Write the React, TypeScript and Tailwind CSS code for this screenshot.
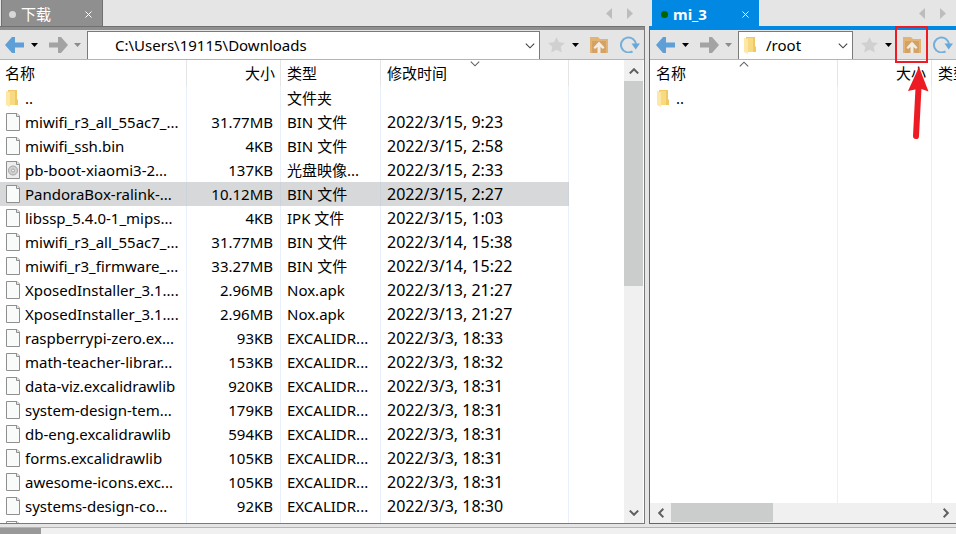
import React from "react";

type Entry = { name: string; size?: string; type?: string; date?: string; kind?: "folder" | "disc"; selected?: boolean };

const localFiles: Entry[] = [
  { name: "..", type: "文件夹", kind: "folder" },
  { name: "miwifi_r3_all_55ac7_...", size: "31.77MB", type: "BIN 文件", date: "2022/3/15, 9:23" },
  { name: "miwifi_ssh.bin", size: "4KB", type: "BIN 文件", date: "2022/3/15, 2:58" },
  { name: "pb-boot-xiaomi3-2...", size: "137KB", type: "光盘映像...", date: "2022/3/15, 2:33", kind: "disc" },
  { name: "PandoraBox-ralink-...", size: "10.12MB", type: "BIN 文件", date: "2022/3/15, 2:27", selected: true },
  { name: "libssp_5.4.0-1_mips...", size: "4KB", type: "IPK 文件", date: "2022/3/15, 1:03" },
  { name: "miwifi_r3_all_55ac7_...", size: "31.77MB", type: "BIN 文件", date: "2022/3/14, 15:38" },
  { name: "miwifi_r3_firmware_...", size: "33.27MB", type: "BIN 文件", date: "2022/3/14, 15:22" },
  { name: "XposedInstaller_3.1....", size: "2.96MB", type: "Nox.apk", date: "2022/3/13, 21:27" },
  { name: "XposedInstaller_3.1....", size: "2.96MB", type: "Nox.apk", date: "2022/3/13, 21:27" },
  { name: "raspberrypi-zero.ex...", size: "93KB", type: "EXCALIDR...", date: "2022/3/3, 18:33" },
  { name: "math-teacher-librar...", size: "153KB", type: "EXCALIDR...", date: "2022/3/3, 18:32" },
  { name: "data-viz.excalidrawlib", size: "920KB", type: "EXCALIDR...", date: "2022/3/3, 18:31" },
  { name: "system-design-tem...", size: "179KB", type: "EXCALIDR...", date: "2022/3/3, 18:31" },
  { name: "db-eng.excalidrawlib", size: "594KB", type: "EXCALIDR...", date: "2022/3/3, 18:31" },
  { name: "forms.excalidrawlib", size: "105KB", type: "EXCALIDR...", date: "2022/3/3, 18:31" },
  { name: "awesome-icons.exc...", size: "105KB", type: "EXCALIDR...", date: "2022/3/3, 18:31" },
  { name: "systems-design-co...", size: "92KB", type: "EXCALIDR...", date: "2022/3/3, 18:30" },
  { name: "" },
];

const remoteFiles: Entry[] = [{ name: "..", kind: "folder" }];

function Arrow({ forward }: { forward?: boolean }) {
  return (
    <svg width="19" height="16" viewBox="0 0 19 16" className={forward ? "block rotate-180 text-[#a3a3a3]" : "block text-[#5f9fd8]"}>
      <path fill="currentColor" d="M0 8L7 0H10V5.5H19V10.5H10V16H7Z" />
    </svg>
  );
}

function Caret({ muted }: { muted?: boolean }) {
  return (
    <svg width="7" height="4" viewBox="0 0 7 4" className={muted ? "block text-[#8c8c8c]" : "block text-black"}>
      <path fill="currentColor" d="M0 0H7L3.5 4Z" />
    </svg>
  );
}

function Chevron({ className, bold }: { className: string; bold?: boolean }) {
  return (
    <svg width="10" height="6" viewBox="0 0 10 6" className={`block ${className}`}>
      <path d="M0.8 0.6L5 4.8L9.2 0.6" fill="none" stroke="currentColor" strokeWidth={bold ? 2 : 1.1} />
    </svg>
  );
}

function FolderIcon() {
  return (
    <svg width="13" height="17" viewBox="0 0 13 17" className="block shrink-0">
      <path fill="#efc964" d="M2 0H11V9L12 10V15H3Z" />
      <path fill="#f8da80" d="M3 1H9V15H3Z" />
      <path fill="#ffe8a6" d="M0 0.5L4 2.5V17L0 15Z" />
    </svg>
  );
}

function FileIcon({ disc }: { disc?: boolean }) {
  return (
    <svg width="15" height="18" viewBox="0 0 15 18" className="block shrink-0">
      <path d="M.5 .5H11L13.5 3V17.5H.5Z" fill={disc ? "#ededed" : "#f9fafa"} stroke="#8f8f8f" />
      <path d="M10.5 .5V3.5H13.5" fill="#e8e8e8" stroke="#8f8f8f" />
      {disc && (
        <g fill="#d2d2d2" stroke="#a2a2a2">
          <circle cx="7" cy="9.5" r="4.5" />
          <circle cx="7" cy="9.5" r="1.5" fill="#f4f4f4" />
        </g>
      )}
    </svg>
  );
}

function Star() {
  return (
    <svg width="17" height="16" viewBox="0 0 17 16" className="block">
      <path fill="#d0d0d0" d="M8.5 0L11 5.2L17 6L12.7 9.8L13.8 15.6L8.5 12.8L3.2 15.6L4.3 9.8L0 6L6 5.2Z" />
    </svg>
  );
}

function FolderUp() {
  return (
    <svg width="18" height="16" viewBox="0 0 18 16" className="block">
      <path fill="#e2b373" d="M0 0H8L10 2H18V16H0Z" />
      <path fill="#d3a264" d="M2 4H16V16H2Z" />
      <path fill="#f2ece4" d="M9 4.5L14.5 10.5L13 12L10.5 10V16H7.5V10L5 12L3.5 10.5Z" />
    </svg>
  );
}

function Refresh() {
  return (
    <svg width="20" height="17" viewBox="0 0 20 17" className="block">
      <path d="M12.5 15.3A7.5 7.5 0 1 1 16 8.5" fill="none" stroke="#74aedb" strokeWidth="2" />
      <path fill="#68a7d8" d="M11.5 7.5H20L15.7 13.5Z" />
    </svg>
  );
}

/* Red frame and arrow that point at the "parent folder" button. */
function Callout() {
  return (
    <svg width="36" height="118" viewBox="0 0 36 118" className="pointer-events-none absolute -top-[11px] -left-[9px] z-10">
      <rect x="2" y="1" width="31" height="35" fill="none" stroke="#ed1c24" strokeWidth="2" />
      <path d="M24.5 62L22 110" stroke="#ed1c24" strokeWidth="6" strokeLinecap="round" />
      <path fill="#ed1c24" d="M25 41L34.5 65.5L26 62.5L14 65Z" />
    </svg>
  );
}

function TabStrip({ title, active }: { title: string; active?: boolean }) {
  return (
    <div className={`flex h-[26px] shrink-0 items-stretch justify-between bg-[#e5e5e5] ${active ? "pl-[3px]" : "pl-px"}`}>
      <div
        className={`flex items-center pt-[3px] text-white ${active ? "w-[107px] bg-[#0088e2] pl-[9px]" : "w-[102px] border-x border-[#707070] bg-[#8f8f8f] pl-[7px]"}`}
      >
        <span className={`mr-[5px] size-[7px] rounded-full ${active ? "bg-[#006400]" : "bg-[#d8d8d8]"}`} />
        <span className={`grow pb-[2px] leading-5 ${active ? "font-bold" : ""}`}>{title}</span>
        <button aria-label="关闭" className="mr-[10px]">
          <svg width="7" height="7" viewBox="0 0 7 7" className="block">
            <path d="M0.5 0.5L6.5 6.5M6.5 0.5L0.5 6.5" stroke="#fff" />
          </svg>
        </button>
      </div>
      <div className={`flex items-center gap-[15px] text-[#bdbdbd] ${active ? "pr-[10px]" : "pr-3"}`}>
        <button aria-label="上一个标签">
          <svg width="6" height="11" viewBox="0 0 6 11" className="block"><path fill="currentColor" d="M6 0V11L0 5.5Z" /></svg>
        </button>
        <button aria-label="下一个标签">
          <svg width="6" height="11" viewBox="0 0 6 11" className="block"><path fill="currentColor" d="M0 0V11L6 5.5Z" /></svg>
        </button>
      </div>
    </div>
  );
}

function Toolbar({ path, remote }: { path: string; remote?: boolean }) {
  return (
    <div className={`flex h-[30px] shrink-0 items-center border-b border-[#b4b4b4] bg-[#e5e5e5] ${remote ? "pr-[3px] pl-[6px]" : "pr-1 pl-[5px]"}`}>
      <button aria-label="后退"><Arrow /></button>
      <button aria-label="后退历史" className="ml-[7px]"><Caret /></button>
      <button aria-label="前进" className="ml-[11px]"><Arrow forward /></button>
      <button aria-label="前进历史" className="ml-[6px]"><Caret muted /></button>
      <div className="relative ml-[6px] min-w-0 grow self-stretch pt-px">
        {remote && <div className="absolute top-[7px] left-[6px]"><FolderIcon /></div>}
        <select aria-label="路径" className="block h-full w-full appearance-none border border-b-0 border-[#7a7a7a] bg-white pl-[27px]">
          <option>{path}</option>
        </select>
        <Chevron className="pointer-events-none absolute top-[13px] right-[5px] text-[#404040]" />
      </div>
      <button aria-label="收藏" className="ml-2"><Star /></button>
      <button aria-label="收藏列表" className="ml-[7px]"><Caret /></button>
      <div className="relative ml-[11px]">
        <button aria-label="上级文件夹" className="block"><FolderUp /></button>
        {remote && <Callout />}
      </div>
      <button aria-label="刷新" className="ml-3"><Refresh /></button>
    </div>
  );
}

function FileTable({ files, sort }: { files: Entry[]; sort: "name" | "date" }) {
  const head = "relative h-[26px] border-r border-[#e5e5e5] p-0 font-normal";
  const cell = "h-6 border-r p-0";
  return (
    <table className="h-full w-[569px] table-fixed border-separate border-spacing-0 text-left leading-5 whitespace-nowrap">
      <colgroup>
        <col className="w-[187px]" />
        <col className="w-[94px]" />
        <col className="w-[100px]" />
        <col className="w-[188px]" />
      </colgroup>
      <thead>
        <tr>
          <th className={`${head} pl-[5px]`}>
            名称
            {sort === "name" && <Chevron className="absolute top-px left-1/2 -translate-x-1/2 rotate-180 text-[#606060]" />}
          </th>
          <th className={`${head} pr-[5px] text-right`}>大小</th>
          <th className={`${head} pl-[6px]`}>类型</th>
          <th className={`${head} pl-[6px]`}>
            修改时间
            {sort === "date" && <Chevron className="absolute top-px left-1/2 -translate-x-1/2 text-[#606060]" />}
          </th>
        </tr>
      </thead>
      <tbody>
        {files.map((f, i) => (
          <tr key={i} className={f.selected ? "bg-[#d7d8da] *:border-[#cdd3da]" : "*:border-[#e8f1fb]"}>
            <td className={`${cell} pl-[6px]`}>
              <div className="flex items-center">
                <span className="w-[19px] shrink-0">
                  {f.kind === "folder" ? <FolderIcon /> : <FileIcon disc={f.kind === "disc"} />}
                </span>
                <span>{f.name}</span>
              </div>
            </td>
            <td className={`${cell} pr-[7px] text-right`}>{f.size}</td>
            <td className={`${cell} pl-[6px]`}>{f.type}</td>
            <td className={`${cell} pl-[6px] text-[16px]`}>{f.date}</td>
          </tr>
        ))}
        <tr>
          {[0, 1, 2, 3].map((c) => (
            <td key={c} className="border-r border-[#e8f1fb] p-0" />
          ))}
        </tr>
      </tbody>
    </table>
  );
}

export default function App() {
  return (
    <div className="flex h-screen w-full flex-col overflow-hidden bg-[#e5e5e5] font-['Noto_Sans','Noto_Sans_CJK_SC',sans-serif] text-[15px] text-black">
      <main className="flex min-h-0 grow gap-1">
        <section aria-label="本地" className="flex min-w-0 flex-[645] flex-col">
          <TabStrip title="下载" />
          <div className="flex min-h-0 grow flex-col border-r border-b border-[#7a7a7a] bg-white">
            <div className="h-1 shrink-0 border-t border-[#707070] bg-[#8f8f8f]" />
            <Toolbar path="C:\Users\19115\Downloads" />
            <div className="flex min-h-0 grow">
              <div className="min-w-0 grow overflow-hidden">
                <FileTable files={localFiles} sort="date" />
              </div>
              <div className="mr-px flex w-[19px] shrink-0 flex-col bg-[#f0f0f0] text-[#606060]">
                <button aria-label="向上滚动" className="flex h-[21px] shrink-0 items-center justify-center">
                  <Chevron bold className="rotate-180" />
                </button>
                <div className="h-[205px] bg-[#cbcdcc]" />
                <button aria-label="向下滚动" className="mt-auto flex h-[21px] shrink-0 items-center justify-center">
                  <Chevron bold className="" />
                </button>
              </div>
            </div>
          </div>
        </section>
        <section aria-label="远程" className="flex min-w-0 flex-[307] flex-col">
          <TabStrip title="mi_3" active />
          <div className="flex min-h-0 grow flex-col border-b border-l border-[#0b80cf] bg-white">
            <div className="h-1 shrink-0 bg-[#0088e2]" />
            <Toolbar path="/root" remote />
            <div className="min-h-0 grow overflow-hidden pl-px">
              <FileTable files={remoteFiles} sort="name" />
            </div>
            <div className="flex h-5 shrink-0 bg-[#f0f0f0] pb-px text-[#606060]">
              <button aria-label="向左滚动" className="flex w-[21px] shrink-0 items-center justify-center">
                <Chevron bold className="rotate-90" />
              </button>
              <div className="w-[102px] bg-[#cbcdcc]" />
              <button aria-label="向右滚动" className="ml-auto flex w-[21px] shrink-0 items-center justify-center">
                <Chevron bold className="-rotate-90" />
              </button>
            </div>
          </div>
        </section>
      </main>
      <footer className="mt-[3px] h-[7px] shrink-0 border-t border-[#b4b4b4] bg-[#f0f0f0]">
        <div className="h-full w-[41px] bg-[#999999]" />
      </footer>
    </div>
  );
}
